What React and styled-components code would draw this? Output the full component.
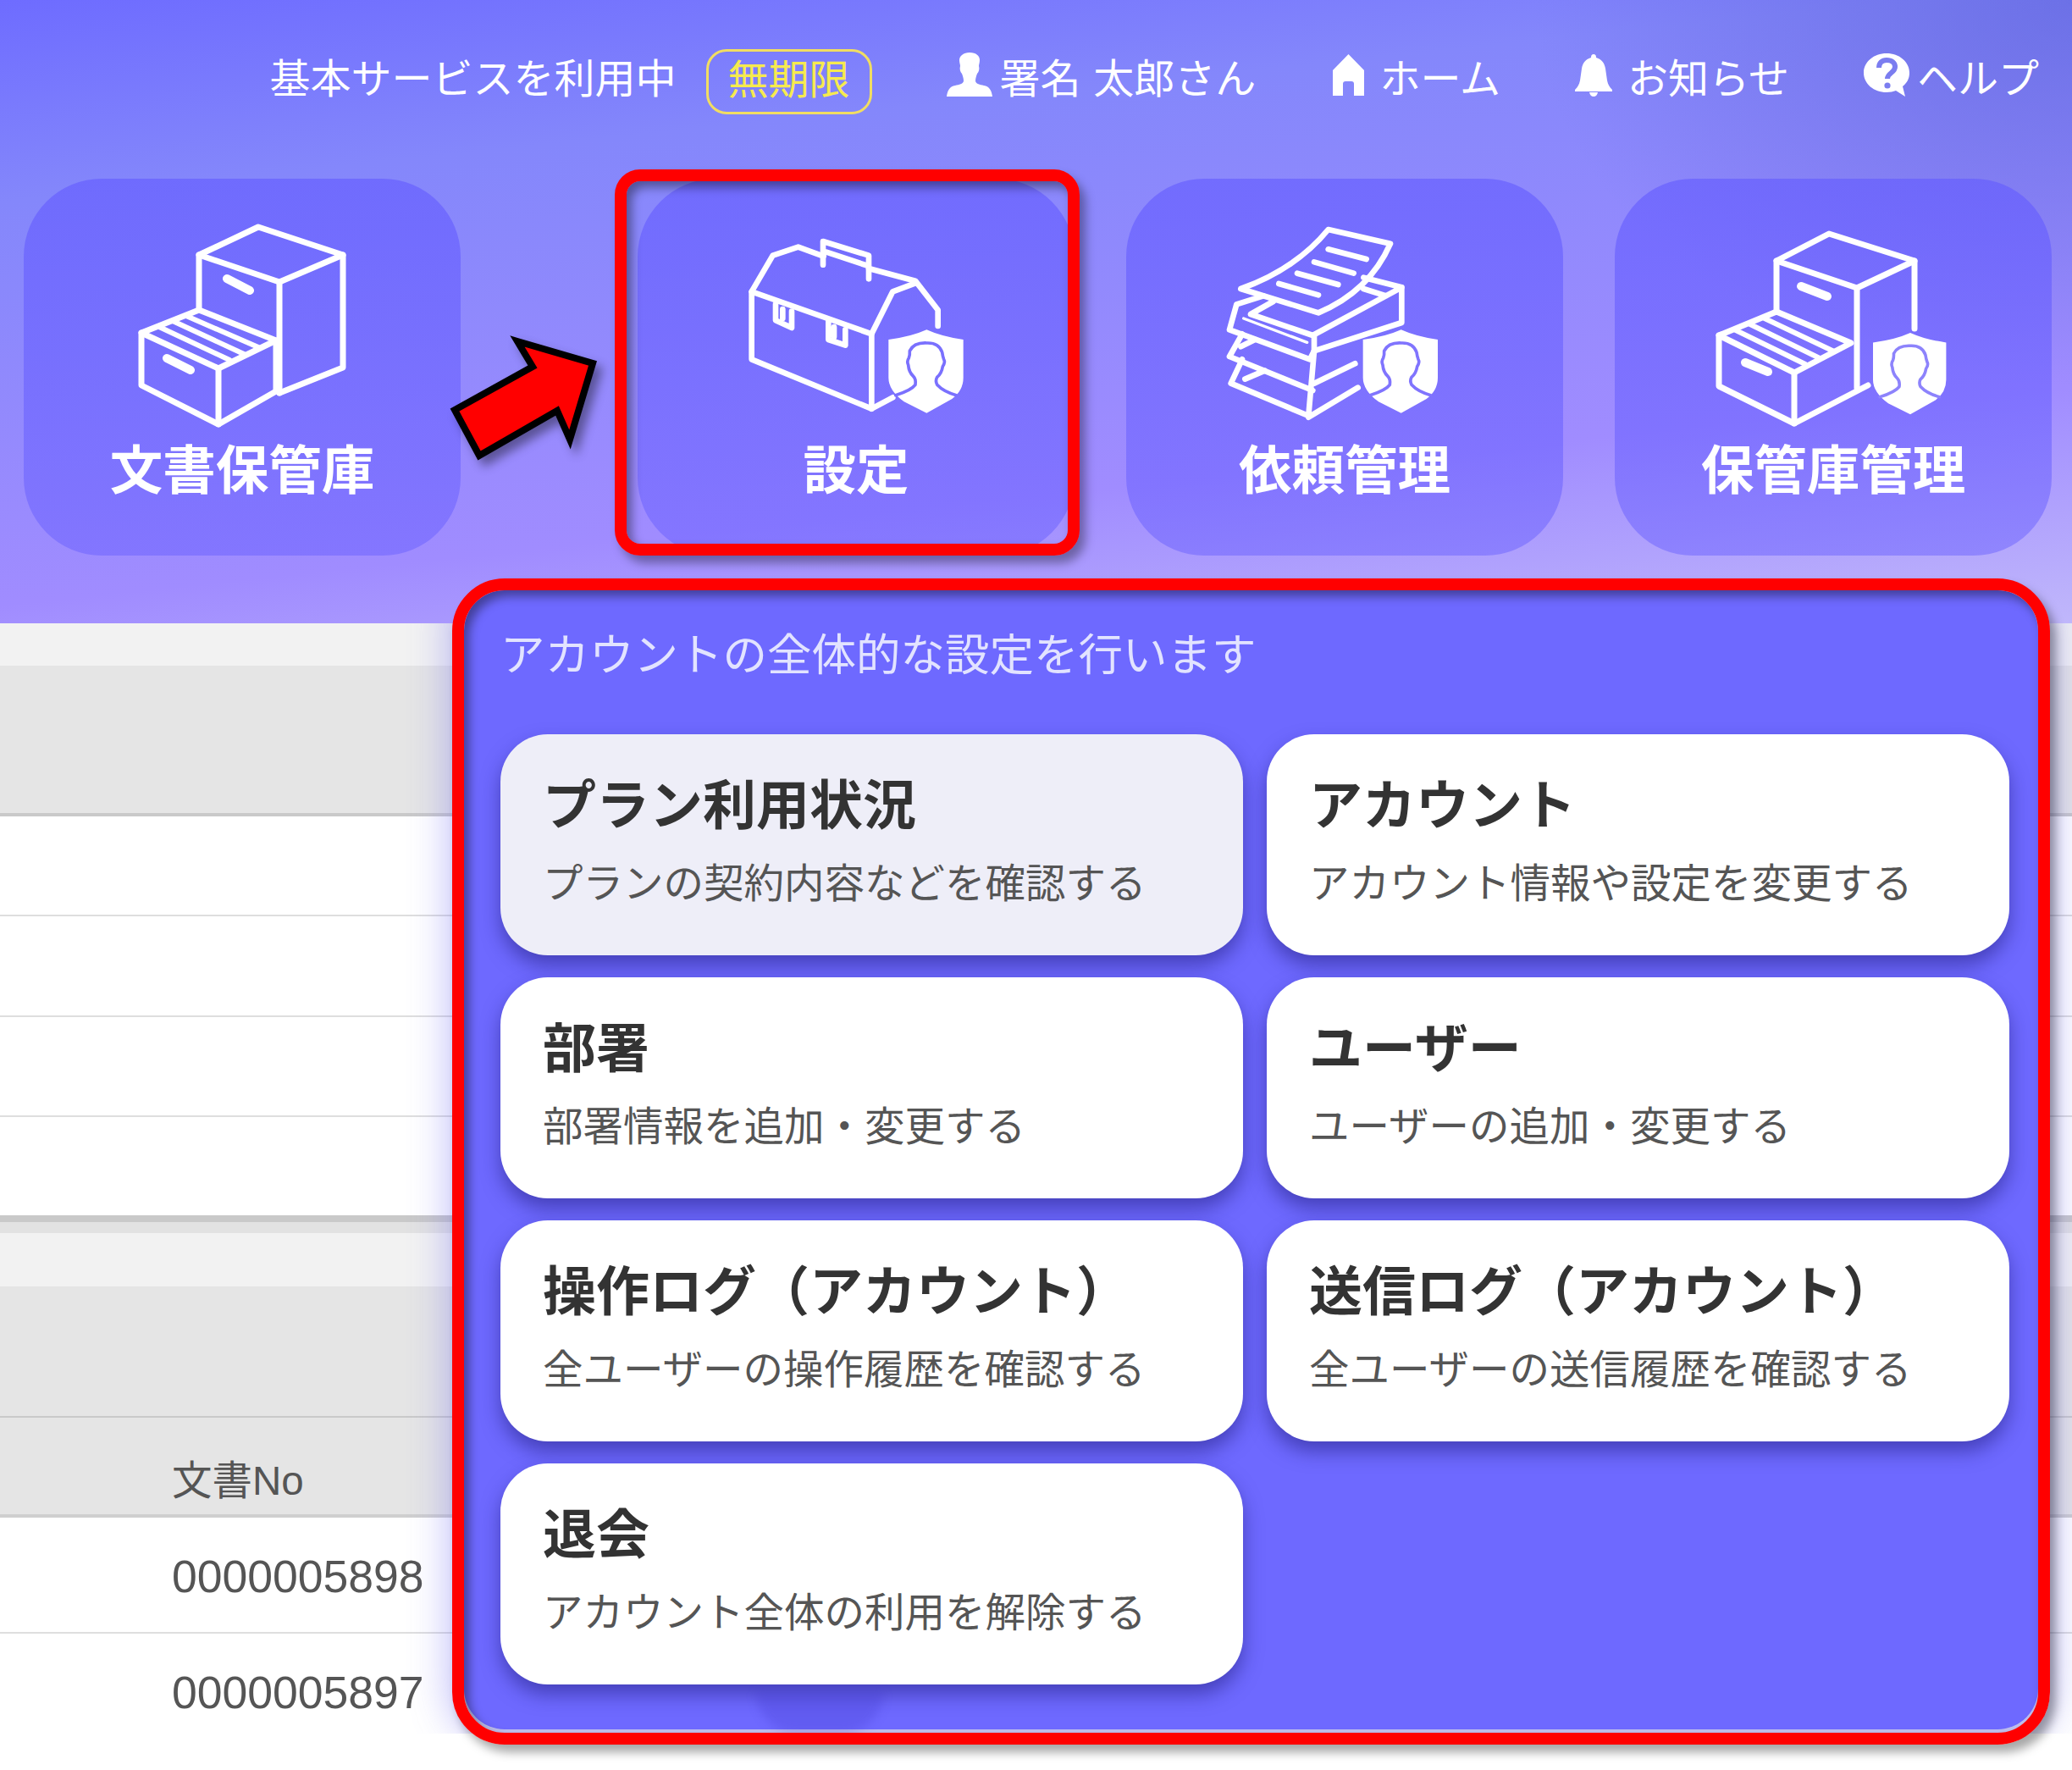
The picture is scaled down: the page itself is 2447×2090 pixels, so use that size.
import React from 'react';
import styled, { createGlobalStyle } from 'styled-components';

const JP = `"Noto Sans CJK JP", "Noto Sans", sans-serif`;

const GlobalStyle = createGlobalStyle`
	html, body {
		margin: 0;
		padding: 0;
		background: #fff;
	}
	body {
		font-family: ${JP};
	}
`;

const Page = styled.div`
	position: relative;
	width: 2447px;
	height: 2090px;
	overflow: hidden;
	background: #fff;
`;

const Hero = styled.header`
	height: 736px;
	box-sizing: border-box;
	background:
		radial-gradient(ellipse 26% 62% at 100% 0, rgba(88, 94, 214, 0.55), rgba(88, 94, 214, 0)),
		linear-gradient(174deg, #6e6cff 0%, #8487fb 24%, #a08cff 72%, #c0b7fb 100%);
`;

const TopBar = styled.nav`
	height: 177px;
	box-sizing: border-box;
	padding-right: 39px;
	display: flex;
	align-items: center;
	justify-content: flex-end;
	gap: 88px;
	color: #fff;
	font-size: 48px;
	line-height: 60px;
`;

const Status = styled.div`
	display: flex;
	align-items: center;
	gap: 35px;
`;

const Badge = styled.span`
	box-sizing: border-box;
	width: 196px;
	height: 77px;
	margin-top: 15px;
	padding-bottom: 12px;
	display: flex;
	align-items: center;
	justify-content: center;
	border: 3px solid #f1dd62;
	border-radius: 24px;
	color: #f6ea4e;
`;

const NavItem = styled.a`
	display: flex;
	align-items: center;
	gap: ${(p) => p.$gap}px;
	margin-right: ${(p) => p.$after || 0}px;
	word-spacing: 4px;
`;

const TileRow = styled.div`
	margin-top: 34px;
	padding-left: 28px;
	display: flex;
`;

const Tile = styled.div`
	width: 516px;
	height: 445px;
	box-sizing: border-box;
	flex: none;
	margin-left: ${(p) => p.$offset || 0}px;
	padding-top: 50px;
	display: flex;
	flex-direction: column;
	align-items: center;
	border-radius: 92px;
	background: linear-gradient(180deg, rgba(100, 92, 255, 0.64), rgba(100, 92, 255, 0.46));
	color: #fff;
`;

const TileIcon = styled.svg`
	width: 300px;
	height: 250px;
	fill: none;
	stroke: #fff;
	stroke-width: ${(p) => p.$stroke || 7};
	stroke-linejoin: round;
	stroke-linecap: round;
`;

const TileLabel = styled.div`
	margin-top: 5px;
	font-size: 62.5px;
	line-height: 70px;
	font-weight: 700;
`;

const Backdrop = styled.main`
	position: relative;
	height: 1311px;
	overflow: hidden;
	background: #fff;
`;

const Band = styled.div`
	height: ${(p) => p.$h}px;
	box-sizing: border-box;
	background: ${(p) => p.$bg};
	border-bottom: ${(p) => p.$line || 0}px solid ${(p) => p.$lineColor || '#c9c9c9'};
`;

const HeadCell = styled.div`
	height: 118px;
	box-sizing: border-box;
	padding: 45px 0 0 203px;
	background: #e5e5e5;
	border-bottom: 4px solid #cfcfcf;
	color: #555;
	font-family: "Liberation Sans", ${JP};
	font-size: 47.5px;
	line-height: 60px;
`;

const DocRow = styled.div`
	height: ${(p) => p.$h}px;
	box-sizing: border-box;
	padding: 40px 0 0 203px;
	background: #fff;
	border-bottom: ${(p) => (p.$last ? 'none' : '2px solid #dedede')};
	color: #555;
	font-family: "Liberation Sans", ${JP};
	font-size: 53.5px;
	line-height: 60px;
`;

const MenuGlow = styled.div`
	position: absolute;
	left: 540px;
	top: -60px;
	width: 1876px;
	height: 1370px;
	border-radius: 50px;
	background: #bfbfee;
	box-shadow: 0 0 46px 10px rgba(108, 103, 240, 0.42);
`;

const Menu = styled.section`
	position: absolute;
	left: 548px;
	top: 697px;
	width: 1859px;
	height: 1345px;
	box-sizing: border-box;
	padding: 37px 32px 0 43px;
	border-radius: 48px;
	background: #6e69ff;
`;

const MenuShade = styled.div`
	position: absolute;
	left: 345px;
	bottom: -4px;
	width: 150px;
	height: 48px;
	border-radius: 0 0 70px 70px;
	background: rgba(55, 45, 190, 0.22);
	filter: blur(6px);
`;

const MenuTitle = styled.div`
	height: 70px;
	margin-bottom: 63px;
	color: #e2e3ff;
	font-size: 52.5px;
	line-height: 70px;
`;

const CardGrid = styled.div`
	position: relative;
	display: grid;
	grid-template-columns: 877px 877px;
	grid-auto-rows: 261px;
	column-gap: 28px;
	row-gap: 26px;
`;

const Card = styled.div`
	box-sizing: border-box;
	padding: 44px 0 0 50px;
	border-radius: 56px;
	background: ${(p) => (p.$active ? '#eeeef8' : '#fff')};
	box-shadow: 0 12px 22px rgba(30, 25, 120, 0.5);
`;

const CardTitle = styled.div`
	color: #333;
	font-size: 63px;
	line-height: 70px;
	font-weight: 700;
`;

const CardText = styled.div`
	margin-top: 29px;
	color: #555;
	font-size: 47.5px;
	line-height: 60px;
`;

const RedFrame = styled.div`
	position: absolute;
	box-sizing: border-box;
	left: ${(p) => p.$x}px;
	top: ${(p) => p.$y}px;
	width: ${(p) => p.$w}px;
	height: ${(p) => p.$h}px;
	border: 14px solid #f00;
	border-radius: ${(p) => p.$radius}px;
	box-shadow:
		7px 9px 12px rgba(0, 0, 0, 0.35),
		inset 6px 7px 12px rgba(0, 0, 0, 0.4);
	pointer-events: none;
`;

const ArrowMark = styled.svg`
	position: absolute;
	left: 520px;
	top: 385px;
	width: 200px;
	height: 170px;
	filter: drop-shadow(7px 8px 6px rgba(0, 0, 0, 0.4));
`;

const UserGlyph = () => (
	<svg width="54" height="53" viewBox="0 0 54 53" fill="#fff">
		<path d="M27 0c8 0 12 4 12 9 0 3-1 5-1 7 1 3 0 7-2 9-1 3-2 5-2 9 1 3 5 4 10 5 6 1 9 5 10 13H0c1-8 4-12 10-13 5-1 9-2 10-5 0-4-1-6-2-9-2-2-3-6-2-9 0-2-1-4-1-7 0-5 5-9 12-9z" />
	</svg>
);

const HomeGlyph = () => (
	<svg width="37" height="49" viewBox="0 0 37 49" fill="#fff">
		<path d="M18.5 0L37 19v30H25V35q0-3-3-3h-7q-3 0-3 3v14H0V19z" />
	</svg>
);

const BellGlyph = () => (
	<svg width="44" height="50" viewBox="0 0 44 50" fill="#fff">
		<path d="M22 0c2 0 3 1 3 4 7 2 10 7 11 13l2 14c1 5 3 8 6 11v2H0v-2c3-3 5-6 6-11l2-14C9 11 12 6 19 4c0-3 1-4 3-4z" />
		<path d="M17 45h10q-1 5-5 5t-5-5z" />
	</svg>
);

const HelpGlyph = () => (
	<svg width="55" height="51" viewBox="0 0 55 51">
		<path fill="#fff" d="M27 0c15 0 27 10 27 23 0 7-3 12-8 16l3 12-11-7c-3 1-7 2-11 2C12 46 0 36 0 23S12 0 27 0z" />
		<path fill="none" stroke="#7b7df0" strokeWidth="6" d="M18 17c0-6 4-9 9-9 6 0 10 3 10 8 0 7-9 7-9 14" />
		<circle cx="28" cy="38" r="3.6" fill="#7b7df0" />
	</svg>
);

// Shield with the person, drawn in its own 265x295 units
const Shield = ({ x, y, line }) => (
	<g transform={`translate(${x} ${y})`}>
		<path fill="#fff" stroke="none" d="M0 35Q80 25 135 0 190 25 265 35V170Q265 215 225 245L135 295 55 255Q0 215 0 170Z" />
		<path
			stroke={line}
			strokeWidth="11"
			fill="none"
			d="M25 232Q80 215 95 195 98 175 88 165 72 150 70 125 64 112 72 100 76 90 75 75 90 45 135 47 178 45 190 80 192 95 196 105 202 115 192 130 188 155 172 168 165 180 172 195 195 220 240 232"
		/>
	</g>
);

const StorageIcon = () => (
	<TileIcon viewBox="135 258 300 250">
		<path d="M304 265L234 298 329 330 404 298Z" />
		<path d="M404 298V431L329 461" />
		<path d="M329 330V461" />
		<path d="M234 298V363" />
		<path d="M234 363L166 390 257 432 325 399Z" />
		<path d="M166 390V452L257 498 325 459" />
		<path d="M257 432V498" />
		<path d="M325 399V459" />
		<path d="M187 383L270 422M203 376L287 415M219 370L304 407" strokeWidth="6" />
		<path d="M267 326L294 340M196 420L224 434" strokeWidth="10" />
	</TileIcon>
);

const StorageAdminIcon = () => (
	<TileIcon viewBox="2017 258 300 250">
		<path d="M2162 273L2100 305 2195 337 2263 305Z" />
		<path d="M2263 305V385" />
		<path d="M2195 337V455" />
		<path d="M2100 305V365" />
		<path d="M2100 365L2032 393 2121 437 2188 402Z" />
		<path d="M2032 393V453L2121 497 2208 452" />
		<path d="M2121 437V497" />
		<path d="M2052 387L2134 427M2069 380L2151 420M2086 373L2168 412" strokeWidth="6" />
		<path d="M2129 335L2160 347M2063 425L2090 436" strokeWidth="10" />
		<g transform="translate(2214 390) scale(0.326)">
			<Shield x={0} y={0} line="#8d83fc" />
		</g>
	</TileIcon>
);

const ToolboxIcon = () => (
	<TileIcon viewBox="0 0 900 750" $stroke={20}>
		<path d="M80 250V490L505 665V400Z" />
		<path d="M80 250L155 122 245 92 335 125M495 168L660 212 740 315V372" />
		<path d="M660 220L580 250 505 400" />
		<path d="M333 155V72L495 122V205M345 110L490 158" />
		<path d="M165 295V352L222 378V320M190 312V345M352 355V420L412 440V385M372 375V410" />
		<path d="M505 665L580 625" />
		<Shield x={565} y={385} line="#7a70fe" />
	</TileIcon>
);

const RequestIcon = () => (
	<TileIcon viewBox="3 0 900 750" $stroke={20}>
		<path d="M85 240Q280 170 395 30L615 80Q540 250 360 325Z" />
		<path d="M395 100L530 135M345 145L485 185M285 185L430 225M220 222L360 262" />
		<path d="M520 200L655 235 340 405 120 330 200 285M520 240L600 265" />
		<path d="M655 235V360L345 460V405" />
		<path d="M165 265L70 295 45 385 330 490 345 460" />
		<path d="M95 345L320 430" strokeWidth="10" />
		<path d="M90 400L45 480 340 600" />
		<path d="M345 460L325 690 50 575 90 490" />
		<path d="M490 505L345 575M500 590L325 695" />
		<path d="M100 560L170 530M85 445L135 420" />
		<Shield x={518} y={385} line="#8074fe" />
	</TileIcon>
);

const cards = [
	{ title: 'プラン利用状況', text: 'プランの契約内容などを確認する', active: true },
	{ title: 'アカウント', text: 'アカウント情報や設定を変更する' },
	{ title: '部署', text: '部署情報を追加・変更する' },
	{ title: 'ユーザー', text: 'ユーザーの追加・変更する' },
	{ title: '操作ログ（アカウント）', text: '全ユーザーの操作履歴を確認する' },
	{ title: '送信ログ（アカウント）', text: '全ユーザーの送信履歴を確認する' },
	{ title: '退会', text: 'アカウント全体の利用を解除する' },
];

const App = () => (
	<Page>
		<GlobalStyle />
		<Hero>
			<TopBar>
				<Status>
					<span>基本サービスを利用中</span>
					<Badge>無期限</Badge>
				</Status>
				<NavItem $gap={9} $after={3}>
					<UserGlyph />
					署名 太郎さん
				</NavItem>
				<NavItem $gap={18}>
					<HomeGlyph />
					ホーム
				</NavItem>
				<NavItem $gap={18}>
					<BellGlyph />
					お知らせ
				</NavItem>
				<NavItem $gap={8}>
					<HelpGlyph />
					ヘルプ
				</NavItem>
			</TopBar>
			<TileRow>
				<Tile>
					<StorageIcon />
					<TileLabel>文書保管庫</TileLabel>
				</Tile>
				<Tile $offset={209}>
					<ToolboxIcon />
					<TileLabel>設定</TileLabel>
				</Tile>
				<Tile $offset={61}>
					<RequestIcon />
					<TileLabel>依頼管理</TileLabel>
				</Tile>
				<Tile $offset={61}>
					<StorageAdminIcon />
					<TileLabel>保管庫管理</TileLabel>
				</Tile>
			</TileRow>
		</Hero>
		<Backdrop>
			<Band $h={50} $bg="#f2f2f2" />
			<Band $h={178} $bg="#e5e5e5" $line={4} />
			<Band $h={118} $bg="#fff" $line={2} $lineColor="#dedede" />
			<Band $h={119} $bg="#fff" $line={2} $lineColor="#dedede" />
			<Band $h={118} $bg="#fff" $line={2} $lineColor="#dedede" />
			<Band $h={124} $bg="#fff" $line={8} />
			<Band $h={13} $bg="#e2e2e2" />
			<Band $h={63} $bg="#f2f2f2" />
			<Band $h={155} $bg="#e5e5e5" $line={2} />
			<HeadCell>文書No</HeadCell>
			<DocRow $h={137}>0000005898</DocRow>
			<DocRow $h={117} $last>0000005897</DocRow>
			<MenuGlow />
		</Backdrop>
		<Menu>
			<MenuTitle>アカウントの全体的な設定を行います</MenuTitle>
			<CardGrid>
				{cards.map((card) => (
					<Card key={card.title} $active={card.active}>
						<CardTitle>{card.title}</CardTitle>
						<CardText>{card.text}</CardText>
					</Card>
				))}
			</CardGrid>
			<MenuShade />
		</Menu>
		<RedFrame $x={726} $y={200} $w={549} $h={456} $radius={30} />
		<RedFrame $x={534} $y={683} $w={1887} $h={1377} $radius={62} />
		<ArrowMark viewBox="520 385 200 170">
			<polygon
				points="611,403 700,429 673,519 658,485 566,538 537,484 629,433"
				fill="#f00"
				stroke="#000"
				strokeWidth="8"
				strokeLinejoin="miter"
			/>
		</ArrowMark>
	</Page>
);

export default App;
